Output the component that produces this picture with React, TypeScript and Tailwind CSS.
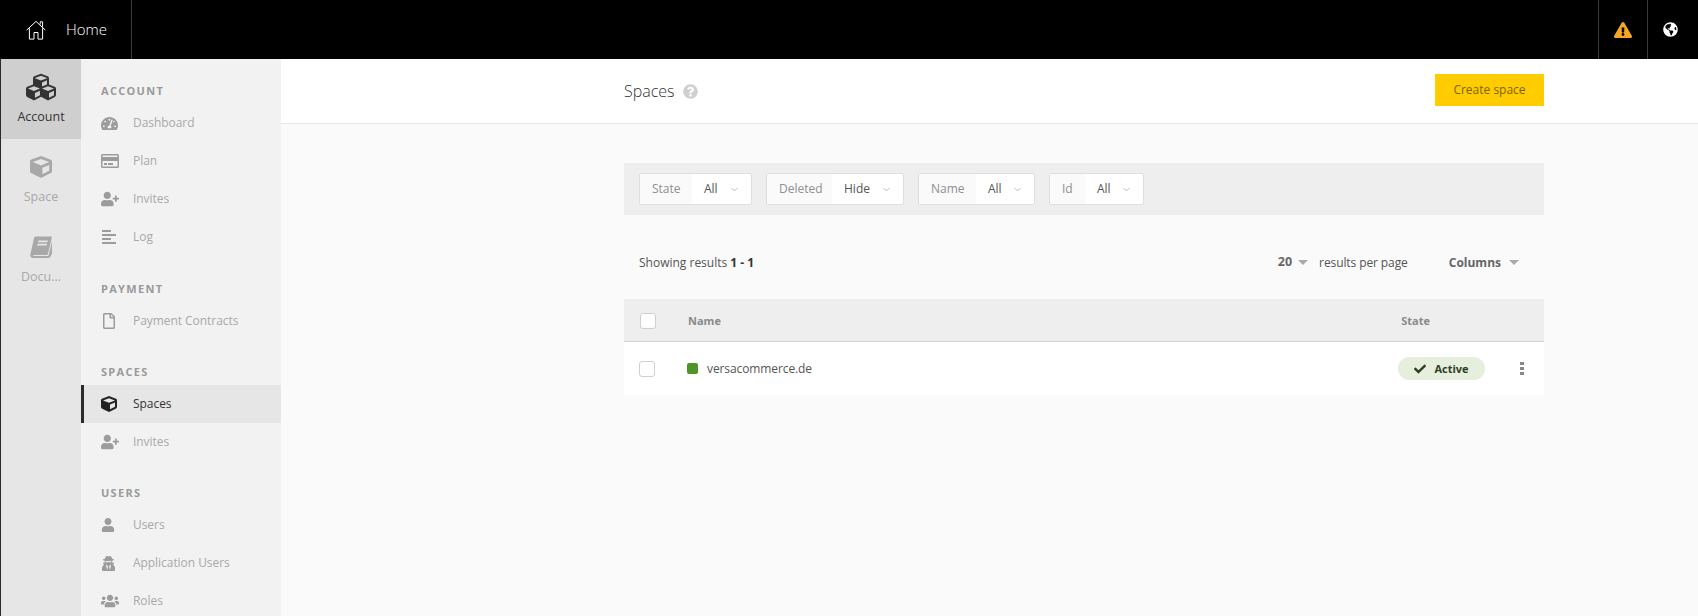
import type { ReactNode } from 'react'
import { FaCheck, FaCube, FaCubes, FaExclamationTriangle, FaGlobeAmericas, FaQuestionCircle, FaRegCreditCard, FaRegFile, FaTachometerAlt, FaUser, FaUserPlus, FaUserSecret, FaUsers, FaAlignLeft } from 'react-icons/fa'
import { LuChevronDown } from 'react-icons/lu'

const sections: { title: string; top: string; items: { label: string; icon: ReactNode; active?: boolean }[] }[] = [
  {
    title: 'ACCOUNT',
    top: 'pt-5',
    items: [
      { label: 'Dashboard', icon: <FaTachometerAlt size={17} /> },
      { label: 'Plan', icon: <FaRegCreditCard size={18} /> },
      { label: 'Invites', icon: <FaUserPlus size={18} /> },
      { label: 'Log', icon: <FaAlignLeft size={16} /> },
    ],
  },
  { title: 'PAYMENT', top: 'pt-[21px]', items: [{ label: 'Payment Contracts', icon: <FaRegFile size={16} /> }] },
  {
    title: 'SPACES',
    top: 'pt-5',
    items: [
      { label: 'Spaces', icon: <FaCube size={16} />, active: true },
      { label: 'Invites', icon: <FaUserPlus size={18} /> },
    ],
  },
  {
    title: 'USERS',
    top: 'pt-5',
    items: [
      { label: 'Users', icon: <FaUser size={14} /> },
      { label: 'Application Users', icon: <FaUserSecret size={15} /> },
      { label: 'Roles', icon: <FaUsers size={18} /> },
    ],
  },
]

const filters = [
  { label: 'State', value: 'All', labelWidth: 'w-[52px]', width: 'w-[113px]' },
  { label: 'Deleted', value: 'Hide', labelWidth: 'w-[65px]', width: 'w-[138px]' },
  { label: 'Name', value: 'All', labelWidth: 'w-[57px]', width: 'w-[117px]' },
  { label: 'Id', value: 'All', labelWidth: 'w-[35px]', width: 'w-[95px]' },
]

function RailItem({ label, icon, active }: { label: string; icon: ReactNode; active?: boolean }) {
  return (
    <div className={`flex h-20 flex-col items-center pt-4 ${active ? 'bg-[#cfcfcf] text-[#333]' : 'text-[#a8a8a8]'}`}>
      <div className="flex h-[24px] items-center">{icon}</div>
      <div className="mt-[8px] text-[12.5px] leading-5">{label}</div>
    </div>
  )
}

function HomeIcon() {
  return (
    <svg width="20" height="20" viewBox="0 0 20 20" fill="none" stroke="white" strokeWidth="1">
      <path d="M0.6 10.2 10 1.4l9.4 8.8" />
      <path d="M3.4 8.2v10.9h4.6v-6.6h4v6.6h4.6V8.2" />
      <path d="M14.2 4.6V1.8h2.4v5" />
    </svg>
  )
}

function BookIcon() {
  return (
    <svg width="22" height="22" viewBox="0 0 22 22" fill="currentColor">
      <path d="M6 0.5h15c.8 0 1 .6.8 1.3L18 17.8c-.2.8-.7 1.2-1.5 1.2H4c-.9 0-1.2.9-.4 1h13.7c.8 0 1.3-.4 1.5-1.2L22 5.6v11.8l-1.6 3.4c-.3.7-.9 1.2-1.7 1.2H3.2C1.4 22 0 20.6.3 18.8L4 2.2C4.2 1.1 5 .5 6 .5z" />
      <path d="M8.4 4.6h9.4l-.4 1.6H8zM7.6 7.8H17l-.4 1.6H7.2z" fill="#e6e6e6" />
    </svg>
  )
}

function Caret() {
  return (
    <svg width="10" height="5" viewBox="0 0 10 5" className="shrink-0 text-[#aaa]" fill="currentColor">
      <path d="M0 0h10L5 5z" />
    </svg>
  )
}

export default function App() {
  return (
    <div className="flex h-[616px] w-[1698px] flex-col overflow-hidden bg-[#fafafa] font-['Open_Sans',sans-serif] text-[12px] text-[#4a4a4a]">
      <header className="flex h-[59px] shrink-0 items-stretch bg-black text-white">
        <div className="flex w-[132px] items-center border-r border-[#3a3a3a] pl-[26px]">
          <HomeIcon />
          <span className="ml-[20px] text-[15px] font-light">Home</span>
        </div>
        <div className="flex-1" />
        <div className="flex w-[49px] items-center justify-center border-l border-[#3a3a3a] pr-[1px]">
          <FaExclamationTriangle size={18} className="text-[#f5a623]" />
        </div>
        <div className="flex w-[51px] items-center justify-center border-l border-[#3a3a3a] pr-[6px]">
          <FaGlobeAmericas size={15} />
        </div>
      </header>

      <div className="flex min-h-0 flex-1">
        <nav className="w-[81px] shrink-0 border-l border-[#2b2b2b] bg-[#e6e6e6]">
          <RailItem label="Account" icon={<FaCubes size={30} />} active />
          <RailItem label="Space" icon={<FaCube size={22} />} />
          <RailItem label="Docu…" icon={<BookIcon />} />
        </nav>

        <aside className="w-[200px] shrink-0 bg-[#f2f2f2]">
          {sections.map((section) => (
            <div key={section.title} className={section.top}>
              <div className="flex h-[25px] items-center pl-5 text-[11px] font-bold tracking-[1.3px] text-[#9a9a9a]">{section.title}</div>
              {section.items.map((item) => (
                <div
                  key={section.title + item.label}
                  className={`flex h-[38px] items-center border-l-[3px] pl-[17px] ${item.active ? 'border-[#2b2b2b] bg-[#e6e6e6] text-[#333]' : 'border-transparent text-[#a9a9a9]'}`}
                >
                  <div className={`flex w-[32px] shrink-0 items-center ${item.active ? 'text-[#222]' : 'text-[#9c9c9c]'}`}>{item.icon}</div>
                  <span className="text-[12px] tracking-[-0.05px]">{item.label}</span>
                </div>
              ))}
            </div>
          ))}
        </aside>

        <main className="min-w-0 flex-1">
          <div className="flex h-[65px] items-center border-b border-[#e6e6e6] bg-white pl-[343px]">
            <div className="flex w-[920px] items-center">
              <h1 className="text-[16px] font-light text-[#333]">Spaces</h1>
              <FaQuestionCircle size={15} className="ml-[8px] text-[#cfcfcf]" />
              <button className="mb-[2px] ml-auto h-[32px] w-[109px] bg-[#ffcc00] text-[12px] text-[#7d6300]">Create space</button>
            </div>
          </div>

          <div className="ml-[343px] w-[920px]">
            <div className="mt-[39px] flex h-[52px] items-center gap-[14px] bg-[#eeeeee] pl-[15px]">
              {filters.map((filter) => (
                <div key={filter.label} className={`flex h-[32px] items-center rounded-[2px] border border-[#dedede] bg-white ${filter.width}`}>
                  <div className={`flex h-full shrink-0 items-center bg-[#fafafa] pl-[12px] text-[#8f8f8f] ${filter.labelWidth}`}>{filter.label}</div>
                  <span className="ml-[12px] text-[#555]">{filter.value}</span>
                  <LuChevronDown size={11} strokeWidth={1.5} className="ml-auto mr-[11px] text-[#999]" />
                </div>
              ))}
            </div>

            <div className="flex h-[84px] items-center px-[15px] pt-[11px]">
              <span className="text-[#555]">
                Showing results <b className="font-bold text-[#333]">1 - 1</b>
              </span>
              <b className="ml-auto text-[12.5px] font-bold text-[#666]">20</b>
              <div className="ml-[6px]">
                <Caret />
              </div>
              <span className="ml-[11px] tracking-[-0.1px] text-[#555]">results per page</span>
              <b className="ml-[41px] font-bold text-[#666]">Columns</b>
              <div className="ml-[8px] mr-[10px]">
                <Caret />
              </div>
            </div>

            <div className="flex h-[43px] items-center border-b border-[#d4d4d4] bg-[#eeeeee] pt-[2px] text-[11px] font-bold text-[#8a8a8a]">
              <div className="ml-[16px] h-[16px] w-[16px] rounded-[3px] border border-[#d0d0d0] bg-white" />
              <span className="ml-[32px]">Name</span>
              <span className="ml-auto mr-[114px]">State</span>
            </div>
            <div className="flex h-[53px] items-center bg-white">
              <div className="ml-[15px] h-[16px] w-[16px] rounded-[3px] border border-[#cfcfcf] bg-white" />
              <div className="ml-[32px] h-[11px] w-[11px] rounded-[2px] bg-[#4e9426]" />
              <span className="ml-[9px] tracking-[-0.1px] text-[#555]">versacommerce.de</span>
              <div className="ml-auto flex h-[23px] w-[87px] items-center justify-center gap-[8px] rounded-full bg-[#e6eedd] pt-[1px] text-[11px] font-bold text-[#2f3f22]">
                <FaCheck size={12} />
                Active
              </div>
              <div className="ml-[35px] mr-[20px] flex flex-col gap-[2px]">
                <span className="h-[3px] w-[4px] bg-[#888]" />
                <span className="h-[3px] w-[4px] bg-[#888]" />
                <span className="h-[3px] w-[4px] bg-[#888]" />
              </div>
            </div>
          </div>
        </main>
      </div>
    </div>
  )
}
